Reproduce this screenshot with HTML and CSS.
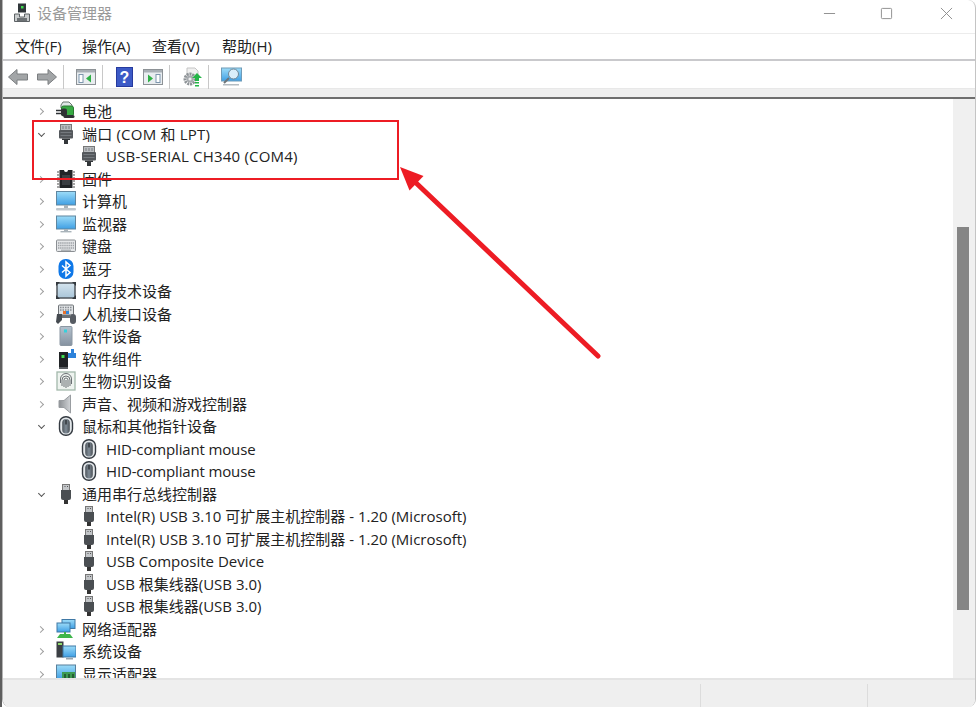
FILE: index.html
```html
<!DOCTYPE html>
<html lang="zh-CN">
<head>
<meta charset="utf-8">
<title>设备管理器</title>
<link rel="stylesheet" href="styles.css">
</head>
<body>
<svg class="defs" width="0" height="0" aria-hidden="true">
  <defs>
    <linearGradient id="screen" x1="0" y1="0" x2="0" y2="1"><stop offset="0" stop-color="#9ddcf8"/><stop offset="1" stop-color="#3f9fe4"/></linearGradient>
    <linearGradient id="metal" x1="0" y1="0" x2="1" y2="0"><stop offset="0" stop-color="#4f565d"/><stop offset=".5" stop-color="#7f8b96"/><stop offset="1" stop-color="#4a5056"/></linearGradient>
    <linearGradient id="mem" x1="0" y1="0" x2="0" y2="1"><stop offset="0" stop-color="#d5e4ee"/><stop offset="1" stop-color="#a9c5d8"/></linearGradient>
    <linearGradient id="tower" x1="0" y1="0" x2="0" y2="1"><stop offset="0" stop-color="#b4c2ce"/><stop offset="1" stop-color="#8592a0"/></linearGradient>
    <linearGradient id="spk" x1="0" y1="0" x2="1" y2="0"><stop offset="0" stop-color="#8c9094"/><stop offset="1" stop-color="#d0d3d6"/></linearGradient>
    <symbol id="i-battery" viewBox="0 0 20 20"><path d="M7 1h6l3 3v3H5V4z" fill="#dfe6e6" stroke="#6b7a70"/><rect x="5.500" y="5" width="12" height="10" rx="2" fill="#38ab44" stroke="#2a7a33"/><path d="M0 9.500h6M0 12.500h6" stroke="#2e3235" stroke-width="1.400"/><rect x="5" y="7.500" width="6" height="7.500" rx="2" fill="#2e3235"/><path d="M9 15.500h8" stroke="#2e3235" stroke-width="3" stroke-linecap="round"/></symbol>
    <symbol id="i-port" viewBox="0 0 20 20"><rect x="4.500" y="0.500" width="11" height="6" fill="#b9bcbf" stroke="#777"/><path d="M7 2v3M10 2v3M13 2v3" stroke="#7b7f83"/><rect x="3" y="6" width="14" height="8.500" rx="1" fill="#54585c"/><path d="M4.500 8.500h11M4.500 11.500h11" stroke="#74797e"/><path d="M6 14.500h8V16h-2v4H8v-4H6z" fill="#33373a"/></symbol>
    <symbol id="i-chip" viewBox="0 0 20 20"><path d="M3.500 1h4.500a2 2 0 0 0 4 0h4.500v18h-13z" fill="#212427"/><path d="M1 3h2.500M1 6h2.500M1 9h2.500M1 12h2.500M1 15h2.500M1 18h2.500M16.500 3H19M16.500 6H19M16.500 9H19M16.500 12H19M16.500 15H19M16.500 18H19" stroke="#888" stroke-width="1.400"/><rect x="6" y="6" width="8" height="10" fill="#3a3e42"/></symbol>
    <symbol id="i-pc" viewBox="0 0 20 20"><rect x="0.500" y="0.500" width="19" height="13.500" fill="url(#screen)" stroke="#5f86a0"/><rect x="8" y="14" width="4" height="3" fill="#a8b3ba"/><rect x="0" y="17" width="20" height="2.400" rx="1" fill="#c1c8cd"/></symbol>
    <symbol id="i-monitor" viewBox="0 0 20 20"><rect x="0.500" y="2" width="19" height="13" fill="url(#screen)" stroke="#5f86a0"/><rect x="8" y="15" width="4" height="2" fill="#a8b3ba"/><rect x="4.500" y="17" width="11" height="1.400" fill="#a9b3ba"/></symbol>
    <symbol id="i-kbd" viewBox="0 0 20 20"><rect x="0.500" y="4" width="19" height="11.500" rx="1" fill="#e4e6e8" stroke="#8b8f93"/><path d="M2 7h16M2 9.500h16M2 12h16" stroke="#9ea2a6" stroke-width="1.400" stroke-dasharray="1.400 .7"/><path d="M5 14.200h10" stroke="#9ea2a6" stroke-width="1.100"/></symbol>
    <symbol id="i-bt" viewBox="0 0 20 20"><rect x="2.500" y="0" width="15" height="20" rx="7" fill="#0f78e8"/><path d="M6 6.500l8 7-4 3.500V3l4 3.500-8 7" fill="none" stroke="#fff" stroke-width="1.500"/></symbol>
    <symbol id="i-mem" viewBox="0 0 20 20"><rect x="1" y="2" width="18" height="15" fill="url(#mem)"/><rect x="1" y="2" width="18" height="15" fill="none" stroke="#4f565c" stroke-width="1.500"/><path d="M0 1h4L0 5zM20 1h-4l4 4zM0 18h4l-4-4zM20 18h-4l4-4z" fill="#33383d"/></symbol>
    <symbol id="i-hid" viewBox="0 0 20 20"><rect x="2.500" y="1" width="15" height="10" rx="1" fill="#dfe2e4" stroke="#6f7377"/><path d="M4 3.500h12M4 6h12" stroke="#8a8f94" stroke-width="1.300" stroke-dasharray="1.500 1"/><rect x="7" y="7" width="3" height="3" fill="#e8702a"/><rect x="10" y="7" width="3" height="3" fill="#2f86dc"/><path d="M6 10H1L0 18l2 2 4-4z" fill="#454a50"/><rect x="14" y="10" width="6" height="10" rx="3" fill="#565b62"/><rect x="6" y="11" width="8" height="3" fill="#6a6f75"/></symbol>
    <symbol id="i-soft" viewBox="0 0 20 20"><rect x="4" y="0.500" width="12" height="19" rx="1" fill="url(#tower)" stroke="#8b97a2"/><rect x="8" y="3.500" width="3" height="3" fill="#35d0dc"/></symbol>
    <symbol id="i-comp" viewBox="0 0 20 20"><rect x="3" y="3" width="9" height="15" fill="#202326"/><rect x="5.500" y="6" width="3" height="3" fill="#3fdc4e"/><rect x="3" y="18" width="9" height="2" fill="#5a5e62"/><path d="M12 4h3V0h3v4h2v5h-8z" fill="#2d82da"/></symbol>
    <symbol id="i-finger" viewBox="0 0 20 20"><rect x="1" y="1" width="18" height="18" fill="#eef3ef" stroke="#a3b8ab" stroke-width="1.300"/><path d="M6 15V9a4 4 0 0 1 8 0v6M8 16V9a2 2 0 0 1 4 0v7M10 9v8M4.500 12V8a5.500 5.500 0 0 1 11 0v5" fill="none" stroke="#6b7074"/></symbol>
    <symbol id="i-sound" viewBox="0 0 20 20"><path d="M3 6.500h5L14.500 1v18L8 13.500H3z" fill="url(#spk)" stroke="#999da1"/></symbol>
    <symbol id="i-mouse" viewBox="0 0 20 20"><rect x="3.500" y="0.700" width="13" height="18.600" rx="6.300" fill="#e3e7ea" stroke="#343a41" stroke-width="1.400"/><rect x="6.200" y="3" width="7.600" height="14.500" rx="3.800" fill="url(#metal)"/><path d="M10 4v4.500" stroke="#24282c" stroke-width="1.300"/></symbol>
    <symbol id="i-usb" viewBox="0 0 20 20"><rect x="6.500" y="0.500" width="7" height="6" fill="#c3c6c9" stroke="#777"/><path d="M8.500 2.500h1M11 2.500h1" stroke="#555"/><path d="M5 6h10v8a2 2 0 0 1-2 2H7a2 2 0 0 1-2-2z" fill="#4a4e52"/><rect x="8" y="16" width="4" height="4" fill="#333"/></symbol>
    <symbol id="i-net" viewBox="0 0 20 20"><rect x="6" y="0.500" width="13" height="9" fill="url(#screen)" stroke="#3f78a5"/><rect x="1" y="4" width="13" height="9" fill="url(#screen)" stroke="#3f78a5"/><path d="M8 13v2H4l-3 4h16l-3-4h-4v-2z" fill="#3fb54a"/></symbol>
    <symbol id="i-sys" viewBox="0 0 20 20"><rect x="0.500" y="0.500" width="7" height="16" fill="#3b3f43"/><rect x="2" y="2" width="4" height="2" fill="#8fd96b"/><rect x="7" y="5" width="13" height="11" fill="url(#screen)" stroke="#3f78a5"/><rect x="10" y="17" width="7" height="1.500" fill="#9aa4ab"/></symbol>
    <symbol id="i-gpu" viewBox="0 0 20 20"><rect x="0.500" y="1" width="19" height="14" fill="url(#screen)" stroke="#567f9c"/><rect x="6" y="8" width="13" height="8" fill="#3c9a52"/><path d="M8 10h2v4H8zM12 10h2v4h-2zM16 10h2v4h-2z" fill="#245f33"/></symbol>
  </defs>
</svg>

<div class="window">
  <header class="titlebar">
    <svg class="app-icon" viewBox="0 0 18 20"><rect x="5" y="0.500" width="8" height="9" fill="#30363a"/><rect x="8" y="3" width="2.500" height="2.500" fill="#3fdc4e"/><path d="M1.500 11h5v3h5v-3h5v7.500h-15z" fill="#c9cccd" stroke="#5d6265"/><rect x="4" y="15" width="10" height="3" fill="#6d7275"/></svg>
    <span class="title">设备管理器</span>
    <div class="controls">
      <svg class="ctl" viewBox="0 0 14 14"><path d="M1 7h12" stroke="#8a8a8a" stroke-width="1"/></svg>
      <svg class="ctl" viewBox="0 0 14 14"><rect x="1.500" y="1.500" width="11" height="11" rx="1" fill="none" stroke="#8a8a8a"/></svg>
      <svg class="ctl" viewBox="0 0 14 14"><path d="M1 1l12 12M13 1L1 13" stroke="#8a8a8a" stroke-width="1"/></svg>
    </div>
  </header>

  <nav class="menubar">
    <span class="menu">文件(F)</span>
    <span class="menu">操作(A)</span>
    <span class="menu">查看(V)</span>
    <span class="menu">帮助(H)</span>
  </nav>

  <div class="toolbar">
    <svg class="tool nav" viewBox="0 0 20 18"><path d="M0.500 9L9 1.500V6h10.500v6H9v4.500z" fill="#a2a5a7" stroke="#7b7e80"/></svg>
    <svg class="tool nav" viewBox="0 0 20 18"><path d="M19.500 9L11 1.500V6H0.500v6H11v4.500z" fill="#a2a5a7" stroke="#7b7e80"/></svg>
    <i class="sep"></i>
    <svg class="tool panel" viewBox="0 0 20 16"><rect x="0.500" y="0.500" width="19" height="15" fill="#e9edf0" stroke="#8d9296"/><rect x="1" y="1" width="18" height="2.500" fill="#a8afb5"/><rect x="3" y="5.500" width="4" height="8" fill="#fff" stroke="#7d96ad"/><path d="M15 5.500v8L10 9.500z" fill="#2fb046"/></svg>
    <i class="sep"></i>
    <svg class="tool help" viewBox="0 0 17 20"><rect width="17" height="20" fill="#263a9e"/><rect x="1" y="1" width="15" height="18" fill="#3c5ac6"/><text x="8.500" y="15.500" class="q">?</text></svg>
    <svg class="tool panel" viewBox="0 0 20 16"><rect x="0.500" y="0.500" width="19" height="15" fill="#e9edf0" stroke="#8d9296"/><rect x="1" y="1" width="18" height="2.500" fill="#a8afb5"/><path d="M5 5.500v8l5-4z" fill="#2fb046"/><rect x="13" y="5.500" width="4" height="8" fill="#fff" stroke="#7d96ad"/></svg>
    <i class="sep"></i>
    <svg class="tool gear" viewBox="0 0 20 20"><path d="M5 1h8l3 3v8H5z" fill="#f0f0f0" stroke="#c4c4c4"/><circle cx="8" cy="12" r="5" fill="none" stroke="#8d9296" stroke-width="3" stroke-dasharray="2 .8"/><circle cx="8" cy="12" r="3.500" fill="#a7abaf"/><circle cx="8" cy="12" r="1.600" fill="#eee"/><path d="M15 6l5 5h-3v3h-4v-3h-3z" fill="#26b548"/><path d="M13 15h4v1.500h-4zM13 18h4v1.500h-4z" fill="#26b548"/></svg>
    <i class="sep"></i>
    <svg class="tool scan" viewBox="0 0 21 20"><rect x="0.500" y="1" width="20" height="13" fill="url(#screen)" stroke="#6f9bb8"/><circle cx="12.500" cy="7" r="5" fill="#d9eefa" stroke="#6f8797"/><path d="M8 11l-5 5" stroke="#6d7478" stroke-width="2"/><rect x="2" y="17" width="16" height="1.500" fill="#b4bcc2"/></svg>
  </div>

  <div class="band"></div>

  <div class="content">
    <ul class="tree">
      <li class="row"><span class="chev closed"></span><svg class="ic"><use href="#i-battery"/></svg><span>电池</span></li>
      <li class="row"><span class="chev open"></span><svg class="ic"><use href="#i-port"/></svg><span class="wide">端口 (COM 和 LPT)</span></li>
      <li class="row child"><svg class="ic"><use href="#i-port"/></svg><span class="wide">USB-SERIAL CH340 (COM4)</span></li>
      <li class="row"><span class="chev closed"></span><svg class="ic"><use href="#i-chip"/></svg><span>固件</span></li>
      <li class="row"><span class="chev closed"></span><svg class="ic"><use href="#i-pc"/></svg><span>计算机</span></li>
      <li class="row"><span class="chev closed"></span><svg class="ic"><use href="#i-monitor"/></svg><span>监视器</span></li>
      <li class="row"><span class="chev closed"></span><svg class="ic"><use href="#i-kbd"/></svg><span>键盘</span></li>
      <li class="row"><span class="chev closed"></span><svg class="ic"><use href="#i-bt"/></svg><span>蓝牙</span></li>
      <li class="row"><span class="chev closed"></span><svg class="ic"><use href="#i-mem"/></svg><span>内存技术设备</span></li>
      <li class="row"><span class="chev closed"></span><svg class="ic"><use href="#i-hid"/></svg><span>人机接口设备</span></li>
      <li class="row"><span class="chev closed"></span><svg class="ic"><use href="#i-soft"/></svg><span>软件设备</span></li>
      <li class="row"><span class="chev closed"></span><svg class="ic"><use href="#i-comp"/></svg><span>软件组件</span></li>
      <li class="row"><span class="chev closed"></span><svg class="ic"><use href="#i-finger"/></svg><span>生物识别设备</span></li>
      <li class="row"><span class="chev closed"></span><svg class="ic"><use href="#i-sound"/></svg><span>声音、视频和游戏控制器</span></li>
      <li class="row"><span class="chev open"></span><svg class="ic"><use href="#i-mouse"/></svg><span>鼠标和其他指针设备</span></li>
      <li class="row child"><svg class="ic"><use href="#i-mouse"/></svg><span class="tight">HID-compliant mouse</span></li>
      <li class="row child"><svg class="ic"><use href="#i-mouse"/></svg><span class="tight">HID-compliant mouse</span></li>
      <li class="row"><span class="chev open"></span><svg class="ic"><use href="#i-usb"/></svg><span>通用串行总线控制器</span></li>
      <li class="row child"><svg class="ic"><use href="#i-usb"/></svg><span>Intel(R) USB 3.10 可扩展主机控制器 - 1.20 (Microsoft)</span></li>
      <li class="row child"><svg class="ic"><use href="#i-usb"/></svg><span>Intel(R) USB 3.10 可扩展主机控制器 - 1.20 (Microsoft)</span></li>
      <li class="row child"><svg class="ic"><use href="#i-usb"/></svg><span>USB Composite Device</span></li>
      <li class="row child"><svg class="ic"><use href="#i-usb"/></svg><span>USB 根集线器(USB 3.0)</span></li>
      <li class="row child"><svg class="ic"><use href="#i-usb"/></svg><span>USB 根集线器(USB 3.0)</span></li>
      <li class="row"><span class="chev closed"></span><svg class="ic"><use href="#i-net"/></svg><span>网络适配器</span></li>
      <li class="row"><span class="chev closed"></span><svg class="ic"><use href="#i-sys"/></svg><span>系统设备</span></li>
      <li class="row"><span class="chev closed"></span><svg class="ic"><use href="#i-gpu"/></svg><span>显示适配器</span></li>
    </ul>
    <div class="scrollbar"><div class="thumb"></div></div>
  </div>

  <footer class="statusbar">
    <div class="cell grow"></div>
    <div class="cell mid"></div>
    <div class="cell end"></div>
  </footer>
</div>

<div class="callout"></div>
<svg class="arrow" viewBox="0 0 978 707" aria-hidden="true">
  <path d="M414 181L598 356" stroke="#ed1c24" stroke-width="5" stroke-linecap="round" fill="none"/>
  <path d="M400 167L423.500 176L409.500 190.500z" fill="#ed1c24"/>
</svg>
</body>
</html>
```
FILE: styles.css
```css
* { box-sizing: border-box; }
html, body { margin: 0; padding: 0; height: 707px; overflow: hidden; }
body {
  background: linear-gradient(90deg, #5e5e5e 2px, #fff 2px);
  font-family: "Open Sans", "Noto Sans CJK SC", sans-serif;
  font-size: 15px;
  color: #222;
  position: relative;
}
.defs { position: absolute; }

.window {
  margin-left: 2px;
  width: 974px;
  height: 707px;
  display: flex;
  flex-direction: column;
  background: #fff;
  border-right: 1px solid #c4c4c4;
  border-left: 1px solid #b5b5b5;
  border-radius: 0 8px 8px 8px;
  overflow: hidden;
}

.titlebar {
  height: 34px;
  flex: none;
  display: flex;
  align-items: flex-start;
  border-bottom: 1px solid #ececec;
  padding-left: 10px;
}
.app-icon { width: 18px; height: 20px; margin-top: 3px; }
.title { margin-left: 6px; margin-top: 3px; color: #9a9a9a; line-height: 20px; font-family: "Noto Sans CJK SC", sans-serif; }
.controls { margin-left: auto; display: flex; gap: 46px; padding: 7px 22px 0 0; }
.ctl { width: 13px; height: 13px; display: block; }
.ctl:nth-child(2) { margin-left: -1px; margin-right: 1px; }
.ctl:first-child { margin-right: -1px; margin-left: 0; }

.menubar {
  height: 27px;
  flex: none;
  display: flex;
  align-items: flex-start;
  padding-left: 12px;
  gap: 20px;
  border-bottom: 2px solid #c9c9cc;
}
.menu { width: 50px; line-height: 25px; white-space: nowrap; }
.menu:first-child { margin-right: -3px; }

.toolbar {
  height: 28px;
  flex: none;
  display: flex;
  align-items: center;
  padding: 4px 0 0 5px;
  border-bottom: 1px solid #e8e8e8;
}
.tool { display: block; flex: none; }
.nav { width: 20px; height: 18px; margin-right: 9px; }
.panel { width: 20px; height: 16px; margin-right: 9px; }
.gear { width: 20px; height: 20px; margin-right: 9px; }
.scan { width: 21px; height: 20px; }
.help { width: 17px; height: 20px; margin-right: 10px; margin-left: 1px; }
.q { font: 700 16px "Liberation Sans", sans-serif; fill: #fff; text-anchor: middle; }
.sep { width: 1px; height: 24px; background: #c8c8c8; margin: 0 12px 0 -3px; flex: none; }

.band {
  height: 10px;
  flex: none;
  background: #efefef;
  border-bottom: 2px solid #6e6e6e;
}

.content { flex: 1; min-height: 0; display: flex; }
.tree {
  flex: 1;
  min-width: 0;
  list-style: none;
  margin: 0;
  padding: 1px 0 0 0;
  overflow: hidden;
}
.row {
  height: 22.5px;
  display: flex;
  align-items: center;
  white-space: nowrap;
  padding-left: 33px;
  line-height: 22px;
}
.row.child { padding-left: 76px; }
.chev { width: 10px; height: 10px; flex: none; margin-right: 10px; position: relative; }
.chev::after {
  content: "";
  position: absolute;
  width: 4px;
  height: 4px;
  border-right: 1px solid #a0a0a0;
  border-bottom: 1px solid #a0a0a0;
}
.chev.closed::after { left: 2px; top: 3px; transform: rotate(-45deg); }
.chev.open::after { left: 3px; top: 2px; transform: rotate(45deg); border-color: #555; }
.ic { width: 20px; height: 20px; flex: none; margin-right: 6px; }
.row.child .ic { margin-right: 7px; }
.wide { letter-spacing: .2px; }
.tight { letter-spacing: -.15px; }

.scrollbar { width: 22px; flex: none; background: #f0f0f0; padding: 128px 6px 0 4px; }
.thumb { height: 383px; background: #858585; }

.statusbar {
  height: 29px;
  flex: none;
  display: flex;
  background: #efefef;
  border-top: 2px solid #e4e4e4;
  padding-top: 4px;
}
.cell { height: 100%; }
.grow { flex: 1; }
.mid { width: 167px; border-left: 1px solid #dcdcdc; }
.end { width: 108px; border-left: 1px solid #dcdcdc; }

.callout {
  position: absolute;
  left: 32px;
  top: 120px;
  width: 367px;
  height: 60px;
  border: 2px solid #ed1c24;
}
.arrow { position: absolute; left: 0; top: 0; width: 978px; height: 707px; pointer-events: none; }
```
